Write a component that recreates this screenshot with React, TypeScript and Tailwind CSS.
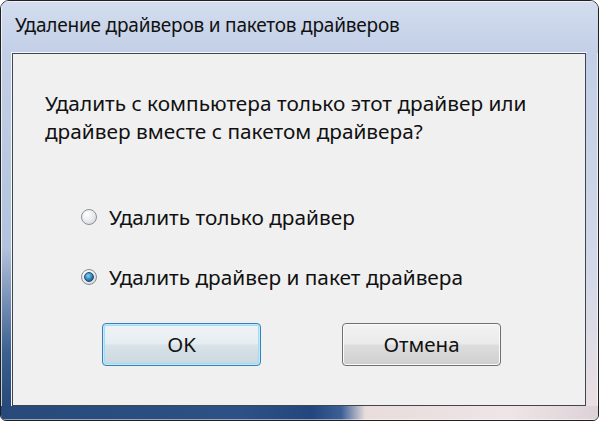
import React from 'react';

const font = { fontFamily: '"Noto Sans", "Open Sans", sans-serif' };

function Radio({ checked }: { checked?: boolean }) {
  return (
    <span className="relative flex h-[16px] w-[16px] shrink-0 items-center justify-center rounded-full border border-[#8c8f94] bg-[radial-gradient(circle_at_35%_30%,#ffffff,#e4e6ea_60%,#c9ccd1)]">
      {checked && (
        <span className="h-[10px] w-[10px] rounded-full border border-[#1f4c6e] bg-[radial-gradient(circle_at_40%_35%,#8fd0f2,#2b7fb5_55%,#0f3f66)]" />
      )}
    </span>
  );
}

function Button({ label, focused }: { label: string; focused?: boolean }) {
  return (
    <div
      className={
        focused
          ? 'flex h-[43px] w-[159px] items-center justify-center rounded-[4px] border border-[#3c7fb1] bg-[linear-gradient(#eef3f6_0%,#e6edf1_48%,#d8e2e8_52%,#cbd7de_100%)] shadow-[inset_0_0_0_1px_#bfeaff,inset_0_0_0_2px_#9fdcf6]'
          : 'flex h-[43px] w-[159px] items-center justify-center rounded-[4px] border border-[#707070] bg-[linear-gradient(#f2f2f2_0%,#ebebeb_48%,#dddddd_52%,#cfcfcf_100%)] shadow-[inset_0_0_0_1px_#fbfbfb]'
      }
    >
      <span className="text-[20.5px] text-[#111]">{label}</span>
    </div>
  );
}

export default function App() {
  return (
    <div className="h-[421px] w-[600px] overflow-hidden bg-white" style={font}>
      <div className="flex h-[421px] w-[599px] flex-col overflow-hidden rounded-t-[9px] rounded-b-[6px] border border-[#202020] bg-[#c9d5ea]">
        {/* title bar */}
        <div className="flex h-[52px] shrink-0 items-center border-t border-l border-white/70 bg-[linear-gradient(#d3ddef,#c2cfe6)] pl-[13px] pb-[4px]">
          <span className="text-[19px] tracking-[-0.2px] text-[#111]">Удаление драйверов и пакетов драйверов</span>
        </div>

        <div className="flex min-h-0 flex-1">
          <div className="w-[11px] shrink-0 border-l border-white/70 bg-[linear-gradient(#c2cfe6_0%,#b3c3dd_55%,#3b5f8f_85%,#274a7a_100%)]" />
          {/* content panel */}
          <div className="flex flex-1 flex-col border border-[#3e4652] bg-[#f0f0f0] shadow-[0_0_0_1px_#f4f7fc]">
            <div className="pt-[35px] pl-[32px] text-[20.8px] leading-[28px] text-[#111]">
              <div>Удалить с компьютера только этот драйвер или</div>
              <div>драйвер вместе с пакетом драйвера?</div>
            </div>

            <div className="mt-[58px] flex flex-col gap-[32px] pl-[68px] text-[20.8px] leading-[28px] text-[#111]">
              <div className="flex items-center gap-[12px]">
                <Radio />
                <span>Удалить только драйвер</span>
              </div>
              <div className="flex items-center gap-[12px]">
                <Radio checked />
                <span>Удалить драйвер и пакет драйвера</span>
              </div>
            </div>

            <div className="mt-[32px] flex gap-[81px] pl-[89px]">
              <Button label="OK" focused />
              <Button label="Отмена" />
            </div>
          </div>
          <div className="w-[12px] shrink-0 border-r border-white/60 bg-[linear-gradient(#c2cfe6_0%,#d2d8e8_60%,#e9dfe2_100%)]" />
        </div>

        {/* bottom frame */}
        <div className="h-[14px] shrink-0 border-b border-white/50 bg-[linear-gradient(90deg,#274a7a_0%,#2d5186_40%,#24467e_52%,#3c5f96_57%,#e8dcdc_61%,#efe5e6_85%,#ddd2d6_100%)]" />
      </div>
    </div>
  );
}
